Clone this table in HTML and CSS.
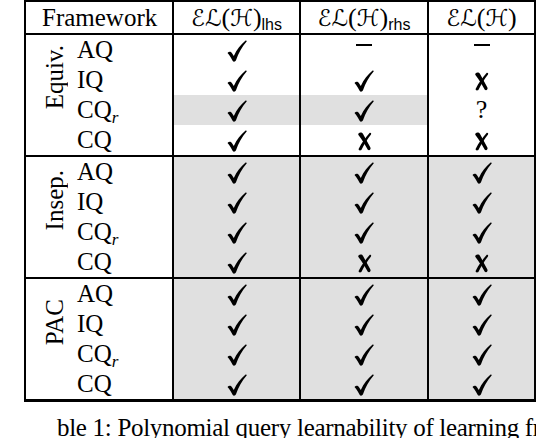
FILE: index.html
```html
<!DOCTYPE html>
<html>
<head>
<meta charset="utf-8">
<link rel="stylesheet" href="styles.css">
</head>
<body>
<svg class="defs" width="0" height="0" aria-hidden="true">
  <defs>
    <symbol id="ck" viewBox="0 0 20 22">
      <path d="M0.5 13 C2 11.2 4.2 11.6 5.2 13.4 L6.8 16 C9.8 9.6 13.8 4.6 18.6 0.6 C19.4 0.2 20 1 19.6 1.6 C14.8 7 11.6 13 9 20.2 C8.4 21.8 6.4 22.2 5.6 20.8 C4.2 18.2 2.6 15.4 0.5 13 Z"/>
    </symbol>
    <symbol id="xx" viewBox="0 0 15 19">
      <path d="M1.5 1.5 C3 0 5.5 0.5 6.2 2.2 L13.4 15.6 C14.2 17.4 12.4 19 10.8 17.8 C8 13 5 7.5 1.8 3.6 C1.2 2.8 1 2 1.5 1.5 Z"/>
      <path d="M12.8 0.8 C13.8 0.6 14.6 1.4 14 2.4 C10.4 7.2 7.2 12 4.8 17.2 C4.2 18.8 1.4 18.8 1.6 17 C4.6 11 8.4 5.6 12.8 0.8 Z"/>
    </symbol>
  </defs>
</svg>
<table class="tbl">
  <colgroup>
    <col class="c-grp"><col class="c-name"><col class="c-a"><col class="c-b"><col class="c-c">
  </colgroup>
  <thead>
    <tr class="hrow">
      <th colspan="2" class="fw">Framework</th>
      <th class="vl"><span class="cal">ℰℒ</span><span class="par">(</span><span class="cal">ℋ</span><span class="par">)</span><sub class="ss">lhs</sub></th>
      <th class="vl"><span class="cal">ℰℒ</span><span class="par">(</span><span class="cal">ℋ</span><span class="par">)</span><sub class="ss">rhs</sub></th>
      <th class="vl"><span class="cal">ℰℒ</span><span class="par">(</span><span class="cal">ℋ</span><span class="par">)</span></th>
    </tr>
  </thead>
  <tbody class="grp g1">
    <tr>
      <td rowspan="4" class="glab"><span class="rot r1">Equiv.</span></td>
      <td class="nm">AQ</td>
      <td class="vl"><svg class="ck"><use href="#ck"/></svg></td>
      <td class="vl"><span class="dash"></span></td>
      <td class="vl"><span class="dash"></span></td>
    </tr>
    <tr>
      <td class="nm">IQ</td>
      <td class="vl"><svg class="ck"><use href="#ck"/></svg></td>
      <td class="vl"><svg class="ck"><use href="#ck"/></svg></td>
      <td class="vl"><svg class="xx"><use href="#xx"/></svg></td>
    </tr>
    <tr>
      <td class="nm">CQ<sub class="r">r</sub></td>
      <td class="vl sh"><svg class="ck"><use href="#ck"/></svg></td>
      <td class="vl sh"><svg class="ck"><use href="#ck"/></svg></td>
      <td class="vl q">?</td>
    </tr>
    <tr>
      <td class="nm">CQ</td>
      <td class="vl"><svg class="ck"><use href="#ck"/></svg></td>
      <td class="vl"><svg class="xx"><use href="#xx"/></svg></td>
      <td class="vl"><svg class="xx"><use href="#xx"/></svg></td>
    </tr>
  </tbody>
  <tbody class="grp g2">
    <tr>
      <td rowspan="4" class="glab"><span class="rot r2">Insep.</span></td>
      <td class="nm">AQ</td>
      <td class="vl sh"><svg class="ck"><use href="#ck"/></svg></td>
      <td class="vl sh"><svg class="ck"><use href="#ck"/></svg></td>
      <td class="vl sh"><svg class="ck"><use href="#ck"/></svg></td>
    </tr>
    <tr>
      <td class="nm">IQ</td>
      <td class="vl sh"><svg class="ck"><use href="#ck"/></svg></td>
      <td class="vl sh"><svg class="ck"><use href="#ck"/></svg></td>
      <td class="vl sh"><svg class="ck"><use href="#ck"/></svg></td>
    </tr>
    <tr>
      <td class="nm">CQ<sub class="r">r</sub></td>
      <td class="vl sh"><svg class="ck"><use href="#ck"/></svg></td>
      <td class="vl sh"><svg class="ck"><use href="#ck"/></svg></td>
      <td class="vl sh"><svg class="ck"><use href="#ck"/></svg></td>
    </tr>
    <tr>
      <td class="nm">CQ</td>
      <td class="vl sh"><svg class="ck"><use href="#ck"/></svg></td>
      <td class="vl sh"><svg class="xx"><use href="#xx"/></svg></td>
      <td class="vl sh"><svg class="xx"><use href="#xx"/></svg></td>
    </tr>
  </tbody>
  <tbody class="grp g3">
    <tr>
      <td rowspan="4" class="glab"><span class="rot r3">PAC</span></td>
      <td class="nm">AQ</td>
      <td class="vl sh"><svg class="ck"><use href="#ck"/></svg></td>
      <td class="vl sh"><svg class="ck"><use href="#ck"/></svg></td>
      <td class="vl sh"><svg class="ck"><use href="#ck"/></svg></td>
    </tr>
    <tr>
      <td class="nm">IQ</td>
      <td class="vl sh"><svg class="ck"><use href="#ck"/></svg></td>
      <td class="vl sh"><svg class="ck"><use href="#ck"/></svg></td>
      <td class="vl sh"><svg class="ck"><use href="#ck"/></svg></td>
    </tr>
    <tr>
      <td class="nm">CQ<sub class="r">r</sub></td>
      <td class="vl sh"><svg class="ck"><use href="#ck"/></svg></td>
      <td class="vl sh"><svg class="ck"><use href="#ck"/></svg></td>
      <td class="vl sh"><svg class="ck"><use href="#ck"/></svg></td>
    </tr>
    <tr>
      <td class="nm">CQ</td>
      <td class="vl sh"><svg class="ck"><use href="#ck"/></svg></td>
      <td class="vl sh"><svg class="ck"><use href="#ck"/></svg></td>
      <td class="vl sh"><svg class="ck"><use href="#ck"/></svg></td>
    </tr>
  </tbody>
</table>
<p class="cap">ble 1: Polynomial query learnability of learning frameworks</p>
</body>
</html>
```
FILE: styles.css
```css
html, body {
  margin: 0;
  padding: 0;
  background: #fff;
}
body {
  width: 536px;
  height: 438px;
  overflow: hidden;
  font-family: "Liberation Serif", "Times New Roman", serif;
  color: #000;
}
.defs {
  position: absolute;
  width: 0;
  height: 0;
}
.tbl {
  border-collapse: collapse;
  table-layout: fixed;
  width: 510px;
  margin: 0 0 0 24px;
  border: 2px solid #000;
  border-bottom-width: 3px;
  font-size: 25px;
}
.c-grp { width: 50px; }
.c-name { width: 98px; }
.c-a { width: 127px; }
.c-b { width: 128px; }
.c-c { width: 107px; }

th, td {
  padding: 0;
  font-weight: normal;
}
.hrow th {
  height: 31px;
  line-height: 26px;
  border-bottom: 2px solid #000;
  vertical-align: middle;
}
.fw {
  text-align: left;
  padding-left: 16px;
}
.vl {
  border-left: 2px solid #000;
  text-align: center;
  vertical-align: middle;
}
.grp td {
  height: 30px;
  line-height: 22px;
}
.grp {
  border-bottom: 2px solid #000;
}
.sh {
  background: #e0e0e0;
}
.nm {
  text-align: left;
  padding-left: 2px;
  vertical-align: middle;
}
.r {
  font-style: italic;
  font-size: 17px;
  vertical-align: -5px;
  line-height: 0;
  margin-left: 0;
}
.glab {
  vertical-align: middle;
  padding: 0 0 0 17px;
}
.rot {
  display: block;
  writing-mode: vertical-rl;
  transform: rotate(180deg);
  line-height: 24px;
  width: 24px;
}
.r1 { margin-bottom: 36px; }
.r2 { margin-bottom: 34px; }
.r3 { margin-bottom: 34px; }

.cal {
  font-family: "DejaVu Sans", sans-serif;
  font-size: 23px;
}
.par {
  font-family: "Liberation Serif", serif;
  font-size: 26px;
}
.ss {
  font-family: "Liberation Sans", Arial, sans-serif;
  font-size: 16px;
  vertical-align: -4px;
  line-height: 0;
}
.ck {
  display: inline-block;
  width: 20px;
  height: 22px;
  vertical-align: middle;
  fill: #000;
}
.xx {
  display: inline-block;
  width: 15px;
  height: 19px;
  vertical-align: middle;
  fill: #000;
}
.dash {
  display: inline-block;
  width: 16px;
  height: 2px;
  background: #000;
  vertical-align: 12px;
}
.q {
  font-size: 26px;
}
.cap {
  margin: 13px 0 0 57px;
  font-size: 25px;
  line-height: 25px;
  white-space: nowrap;
  letter-spacing: -0.3px;
}
```
